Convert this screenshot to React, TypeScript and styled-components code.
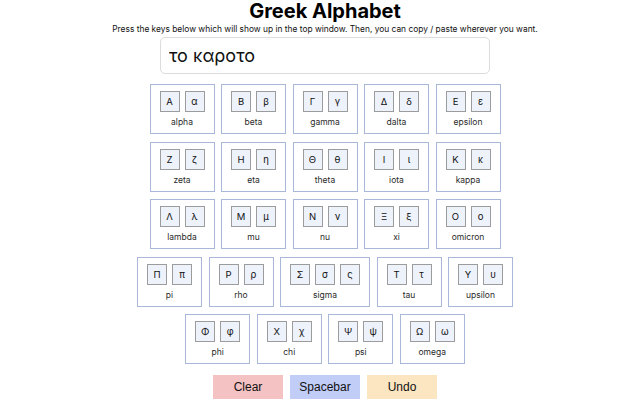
import React, { useState } from 'react';
import styled, { createGlobalStyle } from 'styled-components';

const GlobalStyle = createGlobalStyle`
  html, body {
    margin: 0;
    padding: 0;
    background: #ffffff;
  }
  body {
    font-family: Inter, "Noto Sans", sans-serif;
    color: #111111;
  }
`;

type Letter = { name: string; keys: string[] };

const rows: Letter[][] = [
  [
    { name: 'alpha', keys: ['Α', 'α'] },
    { name: 'beta', keys: ['Β', 'β'] },
    { name: 'gamma', keys: ['Γ', 'γ'] },
    { name: 'dalta', keys: ['Δ', 'δ'] },
    { name: 'epsilon', keys: ['Ε', 'ε'] },
  ],
  [
    { name: 'zeta', keys: ['Ζ', 'ζ'] },
    { name: 'eta', keys: ['Η', 'η'] },
    { name: 'theta', keys: ['Θ', 'θ'] },
    { name: 'iota', keys: ['Ι', 'ι'] },
    { name: 'kappa', keys: ['Κ', 'κ'] },
  ],
  [
    { name: 'lambda', keys: ['Λ', 'λ'] },
    { name: 'mu', keys: ['Μ', 'μ'] },
    { name: 'nu', keys: ['Ν', 'ν'] },
    { name: 'xi', keys: ['Ξ', 'ξ'] },
    { name: 'omicron', keys: ['Ο', 'ο'] },
  ],
  [
    { name: 'pi', keys: ['Π', 'π'] },
    { name: 'rho', keys: ['Ρ', 'ρ'] },
    { name: 'sigma', keys: ['Σ', 'σ', 'ς'] },
    { name: 'tau', keys: ['Τ', 'τ'] },
    { name: 'upsilon', keys: ['Υ', 'υ'] },
  ],
  [
    { name: 'phi', keys: ['Φ', 'φ'] },
    { name: 'chi', keys: ['Χ', 'χ'] },
    { name: 'psi', keys: ['Ψ', 'ψ'] },
    { name: 'omega', keys: ['Ω', 'ω'] },
  ],
];

const Page = styled.div`
  display: flex;
  flex-direction: column;
  align-items: center;
  padding-left: 10px;
`;

const Title = styled.h1`
  margin: 0;
  font-size: 20px;
  line-height: 22px;
  font-weight: 700;
  color: #000000;
`;

const Subtitle = styled.p`
  margin: 0;
  font-size: 8.4px;
  line-height: 14px;
  color: #111111;
`;

const Output = styled.input`
  box-sizing: border-box;
  width: 330px;
  height: 37px;
  margin-top: 1px;
  padding: 0 8px;
  border: 1px solid #dcdcdc;
  border-radius: 5px;
  font-family: Inter, "Noto Sans", sans-serif;
  font-size: 18px;
  color: #111111;
  outline: none;
`;

const Board = styled.div`
  display: flex;
  flex-direction: column;
  gap: 7.5px;
  margin-top: 10px;
`;

const Row = styled.div`
  display: flex;
  justify-content: center;
  gap: 6.5px;
`;

const Card = styled.div`
  box-sizing: border-box;
  height: 50px;
  padding: 6px 9px 0;
  border: 1px solid #a9b8d9;
  display: flex;
  flex-direction: column;
  align-items: center;
`;

const Keys = styled.div`
  display: flex;
  gap: 5px;
`;

const Key = styled.button`
  box-sizing: border-box;
  width: 20px;
  height: 21px;
  padding: 0;
  border: 1px solid #9c9c9c;
  background: #edf2fb;
  font-family: Inter, "Noto Sans", sans-serif;
  font-size: 9.5px;
  color: #111111;
  display: flex;
  align-items: center;
  justify-content: center;
  cursor: pointer;
`;

const Label = styled.div`
  margin-top: 4px;
  font-size: 8.5px;
  line-height: 12px;
  color: #2a2a2a;
`;

const Actions = styled.div`
  display: flex;
  gap: 7px;
  margin-top: 11px;
`;

const ActionButton = styled.button<{ $bg: string }>`
  width: 70px;
  height: 24px;
  border: none;
  background: ${(p) => p.$bg};
  font-family: "Liberation Sans", Arial, sans-serif;
  font-size: 12px;
  color: #111111;
  cursor: pointer;
`;

export default function App() {
  const [text, setText] = useState('το καροτο');
  const [history, setHistory] = useState<string[]>([]);

  const push = (next: string) => {
    setHistory((h) => [...h, text]);
    setText(next);
  };

  const undo = () => {
    if (!history.length) return;
    setText(history[history.length - 1]);
    setHistory(history.slice(0, -1));
  };

  return (
    <>
      <GlobalStyle />
      <Page>
        <Title>Greek Alphabet</Title>
        <Subtitle>
          Press the keys below which will show up in the top window. Then, you can copy / paste wherever you want.
        </Subtitle>
        <Output value={text} onChange={(e) => setText(e.target.value)} />
        <Board>
          {rows.map((row, i) => (
            <Row key={i}>
              {row.map((letter) => (
                <Card key={letter.name}>
                  <Keys>
                    {letter.keys.map((k) => (
                      <Key key={k} onClick={() => push(text + k)}>
                        {k}
                      </Key>
                    ))}
                  </Keys>
                  <Label>{letter.name}</Label>
                </Card>
              ))}
            </Row>
          ))}
        </Board>
        <Actions>
          <ActionButton $bg="#f4c2c2" onClick={() => push('')}>
            Clear
          </ActionButton>
          <ActionButton $bg="#c1ccf7" onClick={() => push(text + ' ')}>
            Spacebar
          </ActionButton>
          <ActionButton $bg="#fbe6c1" onClick={undo}>
            Undo
          </ActionButton>
        </Actions>
      </Page>
    </>
  );
}
